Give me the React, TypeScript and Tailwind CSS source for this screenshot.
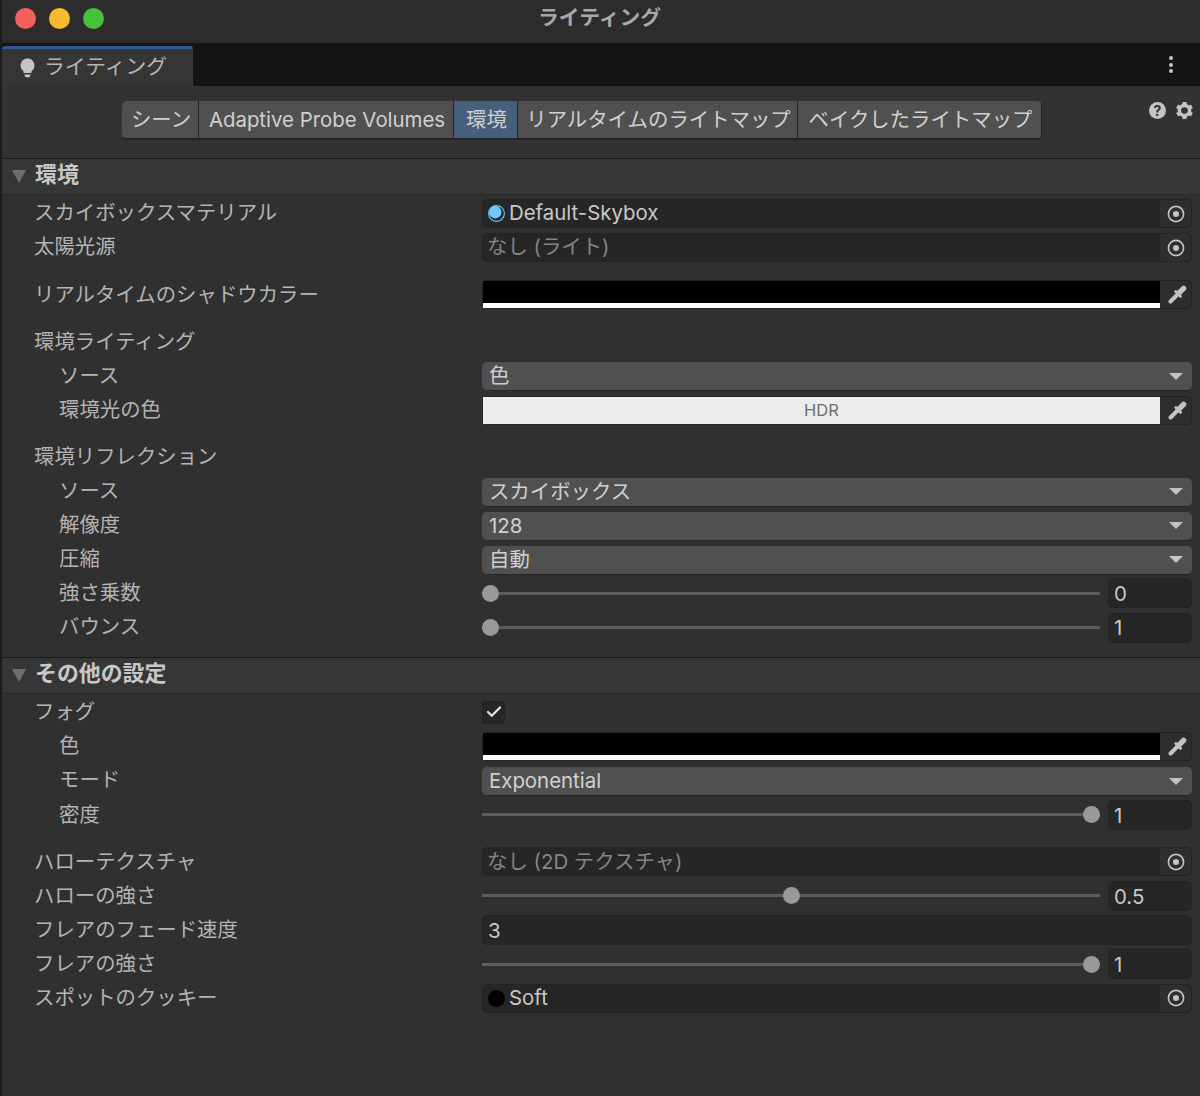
import { ReactNode } from 'react';
import { Check } from 'lucide-react';

const FONT = '[font-family:Inter,"Noto_Sans_CJK_JP",sans-serif]';

const TargetButton = () => (
    <div className="flex h-full w-[31px] shrink-0 items-center justify-center rounded-r-[5px] bg-[#2e2e2e]">
        <svg width="18" height="18" viewBox="0 0 18 18">
            <circle cx="9" cy="9" r="7.6" fill="none" stroke="#c4c4c4" strokeWidth="1.6" />
            <circle cx="9" cy="9" r="3" fill="#c4c4c4" />
        </svg>
    </div>
);

const Picker = () => (
    <div className="flex h-full w-[31px] shrink-0 items-center justify-center rounded-r-[5px] bg-[#2e2e2e] pl-[3px]">
        <svg width="19" height="19" viewBox="0 0 18 18" fill="none" stroke="#c4c4c4" strokeLinecap="round">
            <path d="M2.4 15.6 L9 9" strokeWidth="3.8" />
            <path d="M7.4 6.2 L11.8 10.6" strokeWidth="2.8" />
            <path d="M11 7 L14.8 3.2" strokeWidth="5" />
        </svg>
    </div>
);

const ObjectField = ({
    text,
    muted,
    icon,
}: {
    text: string;
    muted?: boolean;
    icon?: ReactNode;
}) => (
    <div className="flex h-[29px] items-center rounded-[5px] border border-[#232323] bg-[#262626]">
        {icon}
        <span
            className={`flex-1 pl-[4px] text-[20.4px] leading-none ${
                muted ? 'text-[#858585]' : 'text-[#c8c8c8]'
            }`}
        >
            {text}
        </span>
        <TargetButton />
    </div>
);

const SkyIcon = () => (
    <svg className="ml-[5px] shrink-0" width="17" height="17" viewBox="0 0 17 17">
        <circle cx="8.5" cy="8.5" r="7.9" fill="#1d2c38" stroke="#7cc4f0" strokeWidth="1.1" />
        <circle cx="7.2" cy="7.2" r="6.2" fill="#74c6ff" />
    </svg>
);

const ColorField = ({ hdr }: { hdr?: boolean }) => (
    <div className="flex h-[29px] items-stretch rounded-[5px] border border-[#232323] bg-[#2e2e2e]">
        {hdr ? (
            <div className="flex flex-1 items-center justify-center bg-[#ececec] text-[16.5px] text-[#6e6e6e]">
                HDR
            </div>
        ) : (
            <div className="flex flex-1 flex-col bg-black">
                <div className="flex-1" />
                <div className="h-[5px] bg-white" />
            </div>
        )}
        <Picker />
    </div>
);

const Dropdown = ({ text }: { text: string }) => (
    <div className="mt-[2px] flex h-[29px] items-center justify-between rounded-[5px] border-b border-[#252525] bg-[#505050] pl-[7px] pr-[9px]">
        <span className="text-[20.4px] leading-none text-[#d0d0d0]">{text}</span>
        <span className="h-0 w-0 border-x-[7px] border-t-[7px] border-x-transparent border-t-[#c4c4c4]" />
    </div>
);

const NumberField = ({ text, className }: { text: string; className?: string }) => (
    <div
        className={`flex h-[30px] items-center rounded-[5px] border border-[#232323] bg-[#262626] pl-[5px] pt-[2px] text-[20.4px] leading-none text-[#c8c8c8] ${
            className || ''
        }`}
    >
        {text}
    </div>
);

const Slider = ({ value, pct }: { value: string; pct: number }) => (
    <div className="flex items-center">
        <div className="relative h-[3px] w-[618px] bg-[#5c5c5c]">
            <span
                className="absolute top-[-7px] h-[17px] w-[17px] rounded-full bg-[#999999]"
                style={{ left: `${pct * 601}px` }}
            />
        </div>
        <NumberField text={value} className="ml-[8px] flex-1" />
    </div>
);

const Row = ({
    label,
    indent,
    children,
}: {
    label: string;
    indent?: boolean;
    children?: ReactNode;
}) => (
    <div className="flex h-[34.1px] items-center pl-[32px] pr-[8px]">
        <div
            className={`w-[448px] shrink-0 text-[20.4px] leading-none text-[#b4b4b4] ${
                indent ? 'pl-[25px]' : ''
            }`}
        >
            {label}
        </div>
        <div className="min-w-0 flex-1">{children}</div>
    </div>
);

const SectionHeader = ({ title }: { title: string }) => (
    <div className="flex h-[37px] items-center border-y border-t-[#191919] border-b-[#2a2a2a] bg-[#363636] pl-[10px]">
        <span className="h-0 w-0 border-x-[7.5px] border-t-[13px] border-x-transparent border-t-[#6e6e6e]" />
        <span className="mb-[3px] ml-[9px] text-[21.9px] font-bold leading-none text-[#c8c8c8]">
            {title}
        </span>
    </div>
);

const GEAR_TEETH = [0, 60, 120, 180, 240, 300];

const TABS = [
    { label: 'シーン', width: 'w-[77px]' },
    { label: 'Adaptive Probe Volumes', width: 'w-[255px]' },
    { label: '環境', width: 'w-[64px]', active: true },
    { label: 'リアルタイムのライトマップ', width: 'w-[280px]' },
    { label: 'ベイクしたライトマップ', width: 'w-[244px]' },
];

export default function App() {
    return (
        <div
            className={`${FONT} h-[1096px] w-[1200px] overflow-hidden border-l-2 border-l-[#1c1c1c] bg-[#303030]`}
        >
            {/* title bar */}
            <div className="relative flex h-[43px] items-start bg-[#2c2c2c] pl-[13px] pt-[8px]">
                <div className="flex gap-[13px]">
                    <span className="h-[21px] w-[21px] rounded-full bg-[#f4605a]" />
                    <span className="h-[21px] w-[21px] rounded-full bg-[#f7ba2e]" />
                    <span className="h-[21px] w-[21px] rounded-full bg-[#47c03a]" />
                </div>
                <div className="absolute left-[536px] top-[5px] text-[20.8px] font-bold leading-[25px] text-[#a8a8a8]">
                    ライティング
                </div>
            </div>

            {/* tab strip */}
            <div className="flex h-[43px] items-end justify-between bg-[#141414]">
                <div className="flex h-[40px] w-[191px] items-center rounded-t-[3px] border-t-[3px] border-t-[#2f5a93] bg-[#353535] pl-[18px]">
                    <svg width="15" height="20" viewBox="0 0 15 20">
                        <path d="M7.5 0.5a7 7 0 0 1 4 12.7V15H3.5v-1.8A7 7 0 0 1 7.5 0.5Z" fill="#c4c4c4" />
                        <path d="M4.5 16.5h6a3 3 0 0 1-6 0Z" fill="#c4c4c4" />
                    </svg>
                    <span className="ml-[9px] text-[20.8px] leading-none text-[#b4b4b4]">
                        ライティング
                    </span>
                </div>
                <div className="mb-[13px] mr-[27px] flex flex-col gap-[2.5px]">
                    <span className="h-[4px] w-[4px] rounded-full bg-[#c4c4c4]" />
                    <span className="h-[4px] w-[4px] rounded-full bg-[#c4c4c4]" />
                    <span className="h-[4px] w-[4px] rounded-full bg-[#c4c4c4]" />
                </div>
            </div>

            {/* toolbar */}
            <div className="relative flex h-[72px] items-start bg-[#323232] pl-[120px] pt-[15px]">
                <div className="flex h-[39px] overflow-hidden rounded-[5px] border-b-2 border-[#232323] bg-[#232323]">
                    {TABS.map((tab) => (
                        <div
                            key={tab.label}
                            className={`flex items-center justify-center border-r border-[#232323] pl-[2px] pt-[2px] text-[20.4px] leading-none text-[#d0d0d0] ${tab.width} ${
                                tab.active ? 'bg-[#46607c]' : 'bg-[#505050]'
                            }`}
                        >
                            {tab.label}
                        </div>
                    ))}
                </div>
                <div className="absolute left-[1147px] top-[16px] flex items-center gap-[10px]">
                    <span className="flex h-[17px] w-[17px] items-center justify-center rounded-full bg-[#c4c4c4] text-[14px] font-bold leading-none text-[#303030]">
                        ?
                    </span>
                    <svg width="17" height="17" viewBox="0 0 24 24" fill="#c4c4c4">
                        <circle cx="12" cy="12" r="7.2" fill="none" stroke="#c4c4c4" strokeWidth="5" />
                        {GEAR_TEETH.map((deg) => (
                            <rect
                                key={deg}
                                x="9"
                                y="0"
                                width="6"
                                height="5"
                                transform={`rotate(${deg} 12 12)`}
                            />
                        ))}
                    </svg>
                </div>
            </div>

            <SectionHeader title="環境" />
            <div className="h-[1.5px]" />
            <Row label="スカイボックスマテリアル">
                <ObjectField text="Default-Skybox" icon={<SkyIcon />} />
            </Row>
            <Row label="太陽光源">
                <ObjectField text="なし (ライト)" muted />
            </Row>
            <div className="h-[13px]" />
            <Row label="リアルタイムのシャドウカラー">
                <ColorField />
            </Row>
            <div className="h-[13px]" />
            <Row label="環境ライティング" />
            <Row label="ソース" indent>
                <Dropdown text="色" />
            </Row>
            <Row label="環境光の色" indent>
                <ColorField hdr />
            </Row>
            <div className="h-[13px]" />
            <Row label="環境リフレクション" />
            <Row label="ソース" indent>
                <Dropdown text="スカイボックス" />
            </Row>
            <Row label="解像度" indent>
                <Dropdown text="128" />
            </Row>
            <Row label="圧縮" indent>
                <Dropdown text="自動" />
            </Row>
            <Row label="強さ乗数" indent>
                <Slider value="0" pct={0} />
            </Row>
            <Row label="バウンス" indent>
                <Slider value="1" pct={0} />
            </Row>
            <div className="h-[12.3px]" />

            <SectionHeader title="その他の設定" />
            <div className="h-[1.5px]" />
            <Row label="フォグ">
                <div className="flex h-[23px] w-[23px] items-center justify-center rounded-[3px] border border-[#232323] bg-[#262626]">
                    <Check size={18} strokeWidth={3} color="#e4e4e4" />
                </div>
            </Row>
            <Row label="色" indent>
                <ColorField />
            </Row>
            <Row label="モード" indent>
                <Dropdown text="Exponential" />
            </Row>
            <Row label="密度" indent>
                <Slider value="1" pct={1} />
            </Row>
            <div className="h-[13px]" />
            <Row label="ハローテクスチャ">
                <ObjectField text="なし (2D テクスチャ)" muted />
            </Row>
            <Row label="ハローの強さ">
                <Slider value="0.5" pct={0.5} />
            </Row>
            <Row label="フレアのフェード速度">
                <NumberField text="3" />
            </Row>
            <Row label="フレアの強さ">
                <Slider value="1" pct={1} />
            </Row>
            <Row label="スポットのクッキー">
                <ObjectField
                    text="Soft"
                    icon={
                        <span className="ml-[5px] block h-[17px] w-[17px] shrink-0 rounded-full bg-black" />
                    }
                />
            </Row>
        </div>
    );
}
